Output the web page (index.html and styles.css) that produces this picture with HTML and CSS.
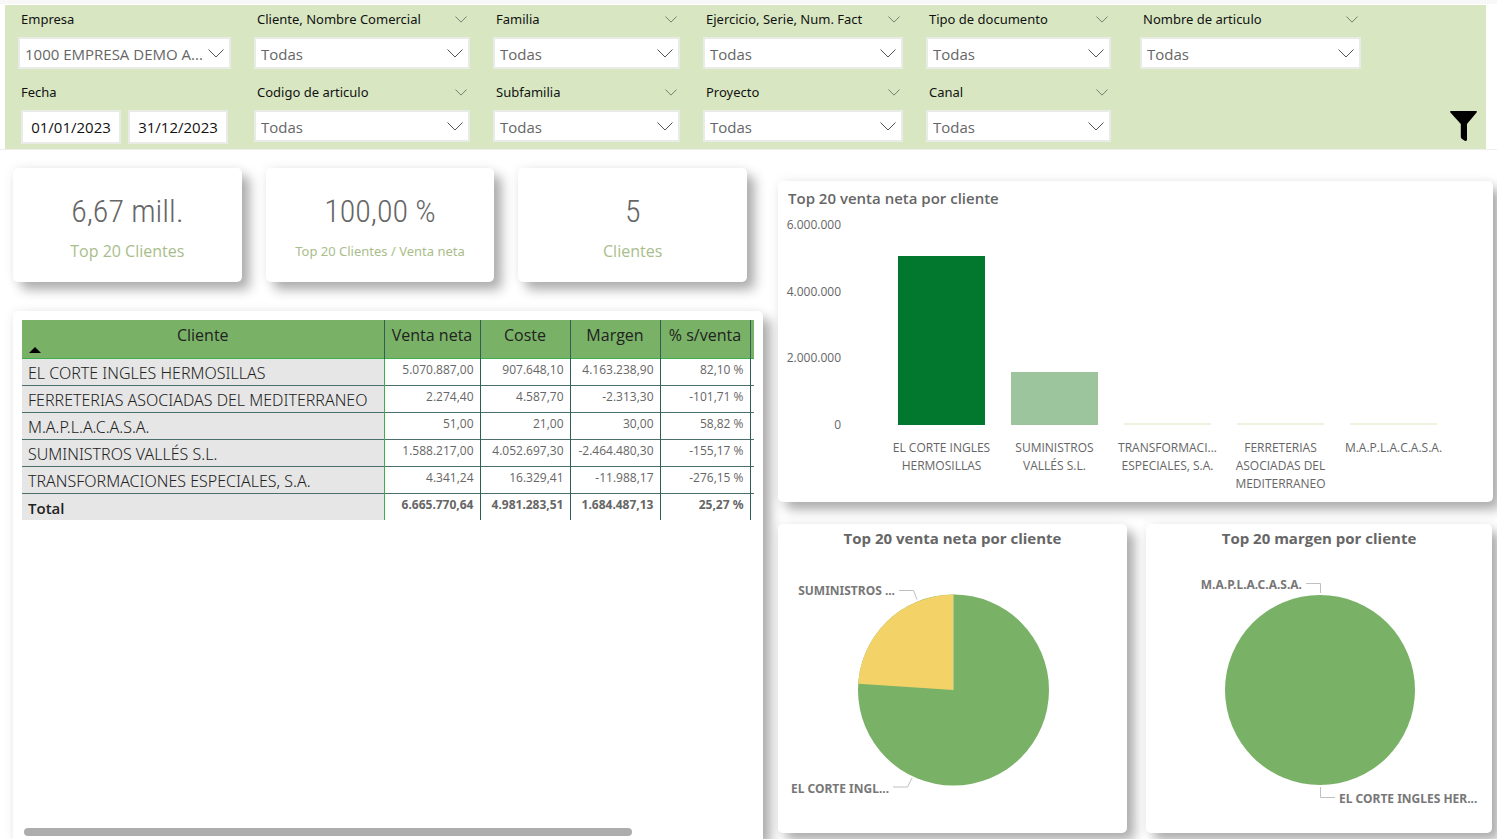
FILE: index.html
```html
<!DOCTYPE html>
<html lang="es">
<head>
<meta charset="utf-8">
<meta name="viewport" content="width=device-width, initial-scale=1">
<title>Top 20 clientes</title>
<link rel="stylesheet" href="styles.css">
</head>
<body>
<svg class="defs" aria-hidden="true">
  <symbol id="chev" viewBox="0 0 16 9"><path d="M0.5 0.5 8 8 15.5 0.5" fill="none" stroke="currentColor"/></symbol>
</svg>

<form class="filters">
  <div class="filter">
    <div class="filter-head"><label for="empresa">Empresa</label></div>
    <div class="drop"><select id="empresa"><option>1000 EMPRESA DEMO A...</option></select><svg><use href="#chev"/></svg></div>
  </div>
  <div class="filter">
    <div class="filter-head"><label for="cliente">Cliente, Nombre Comercial</label><button type="button" aria-label="Opciones de cliente"><svg><use href="#chev"/></svg></button></div>
    <div class="drop"><select id="cliente"><option>Todas</option></select><svg><use href="#chev"/></svg></div>
  </div>
  <div class="filter">
    <div class="filter-head"><label for="familia">Familia</label><button type="button" aria-label="Opciones de familia"><svg><use href="#chev"/></svg></button></div>
    <div class="drop"><select id="familia"><option>Todas</option></select><svg><use href="#chev"/></svg></div>
  </div>
  <div class="filter">
    <div class="filter-head"><label for="ejercicio">Ejercicio, Serie, Num. Fact</label><button type="button" aria-label="Opciones de ejercicio"><svg><use href="#chev"/></svg></button></div>
    <div class="drop"><select id="ejercicio"><option>Todas</option></select><svg><use href="#chev"/></svg></div>
  </div>
  <div class="filter filter-short">
    <div class="filter-head"><label for="tipo">Tipo de documento</label><button type="button" aria-label="Opciones de tipo"><svg><use href="#chev"/></svg></button></div>
    <div class="drop"><select id="tipo"><option>Todas</option></select><svg><use href="#chev"/></svg></div>
  </div>
  <div class="filter filter-last">
    <div class="filter-head"><label for="nombre">Nombre de articulo</label><button type="button" aria-label="Opciones de nombre"><svg><use href="#chev"/></svg></button></div>
    <div class="drop"><select id="nombre"><option>Todas</option></select><svg><use href="#chev"/></svg></div>
  </div>

  <div class="filter">
    <div class="filter-head"><label for="desde">Fecha</label></div>
    <div class="dates"><input id="desde" type="text" value="01/01/2023"><input type="text" value="31/12/2023" aria-label="Fecha hasta"></div>
  </div>
  <div class="filter">
    <div class="filter-head"><label for="codigo">Codigo de articulo</label><button type="button" aria-label="Opciones de codigo"><svg><use href="#chev"/></svg></button></div>
    <div class="drop"><select id="codigo"><option>Todas</option></select><svg><use href="#chev"/></svg></div>
  </div>
  <div class="filter">
    <div class="filter-head"><label for="subfamilia">Subfamilia</label><button type="button" aria-label="Opciones de subfamilia"><svg><use href="#chev"/></svg></button></div>
    <div class="drop"><select id="subfamilia"><option>Todas</option></select><svg><use href="#chev"/></svg></div>
  </div>
  <div class="filter">
    <div class="filter-head"><label for="proyecto">Proyecto</label><button type="button" aria-label="Opciones de proyecto"><svg><use href="#chev"/></svg></button></div>
    <div class="drop"><select id="proyecto"><option>Todas</option></select><svg><use href="#chev"/></svg></div>
  </div>
  <div class="filter filter-short">
    <div class="filter-head"><label for="canal">Canal</label><button type="button" aria-label="Opciones de canal"><svg><use href="#chev"/></svg></button></div>
    <div class="drop"><select id="canal"><option>Todas</option></select><svg><use href="#chev"/></svg></div>
  </div>
  <button type="button" class="funnel" aria-label="Filtros"><svg viewBox="0 0 27 30"><path d="M1 0h25q1.500 0 .6 1.400L17 13v15.500q0 2-2.200 1.200L12 28q-1.200-.8-1.200-2.200V13L.4 1.400Q-.5 0 1 0z"/></svg></button>
</form>

<main class="board">
  <section class="left">
    <div class="kpis">
      <article class="card kpi"><strong>6,67 mill.</strong><span>Top 20 Clientes</span></article>
      <article class="card kpi"><strong>100,00 %</strong><span class="small">Top 20 Clientes / Venta neta</span></article>
      <article class="card kpi"><strong>5</strong><span>Clientes</span></article>
    </div>
    <div class="card sheet">
      <table>
        <colgroup><col class="c-name"><col class="c-net"><col class="c-num"><col class="c-num"><col class="c-num"><col class="c-end"></colgroup>
        <thead>
          <tr><th scope="col" class="sorted">Cliente<svg viewBox="0 0 12 6"><path d="M0 6 6 0 12 6z"/></svg></th><th scope="col">Venta neta</th><th scope="col">Coste</th><th scope="col">Margen</th><th scope="col">% s/venta</th><td></td></tr>
        </thead>
        <tbody>
          <tr><th scope="row">EL CORTE INGLES HERMOSILLAS</th><td>5.070.887,00</td><td>907.648,10</td><td>4.163.238,90</td><td>82,10 %</td><td></td></tr>
          <tr><th scope="row">FERRETERIAS ASOCIADAS DEL MEDITERRANEO</th><td>2.274,40</td><td>4.587,70</td><td>-2.313,30</td><td>-101,71 %</td><td></td></tr>
          <tr><th scope="row">M.A.P.L.A.C.A.S.A.</th><td>51,00</td><td>21,00</td><td>30,00</td><td>58,82 %</td><td></td></tr>
          <tr><th scope="row">SUMINISTROS VALLÉS S.L.</th><td>1.588.217,00</td><td>4.052.697,30</td><td>-2.464.480,30</td><td>-155,17 %</td><td></td></tr>
          <tr><th scope="row">TRANSFORMACIONES ESPECIALES, S.A.</th><td>4.341,24</td><td>16.329,41</td><td>-11.988,17</td><td>-276,15 %</td><td></td></tr>
        </tbody>
        <tfoot>
          <tr><th scope="row">Total</th><td>6.665.770,64</td><td>4.981.283,51</td><td>1.684.487,13</td><td>25,27 %</td><td></td></tr>
        </tfoot>
      </table>
      <div class="scroll"></div>
    </div>
  </section>

  <section class="right">
    <article class="card bars">
      <h2>Top 20 venta neta por cliente</h2>
      <div class="chart">
        <div class="axis"><span>6.000.000</span><span>4.000.000</span><span>2.000.000</span><span>0</span></div>
        <div class="plot">
          <div class="slot"><i class="bar dark" style="height:84.5%"></i></div>
          <div class="slot"><i class="bar mid" style="height:26.5%"></i></div>
          <div class="slot"><i class="bar" style="height:0.07%"></i></div>
          <div class="slot"><i class="bar" style="height:0.04%"></i></div>
          <div class="slot"><i class="bar" style="height:0%"></i></div>
        </div>
        <div class="names">
          <span>EL CORTE INGLES<br>HERMOSILLAS</span>
          <span>SUMINISTROS<br>VALLÉS S.L.</span>
          <span>TRANSFORMACI...<br>ESPECIALES, S.A.</span>
          <span>FERRETERIAS<br>ASOCIADAS DEL<br>MEDITERRANEO</span>
          <span>M.A.P.L.A.C.A.S.A.</span>
        </div>
      </div>
    </article>
    <div class="pies">
      <article class="card pie">
        <h3>Top 20 venta neta por cliente</h3>
        <svg viewBox="0 0 349 279">
          <circle cx="175.500" cy="136" r="95.500" fill="#79b166"/>
          <path d="M175.500 136V40.500A95.500 95.500 0 0 0 80.200 129.800z" fill="#f3d268"/>
          <path d="M175.500 136V40.500" stroke="#a9cb84"/>
          <path d="M121 36.500h14.500l3.500 9M115 233h14.500l4.500-9" class="lead"/>
          <text x="117" y="41" text-anchor="end">SUMINISTROS ...</text>
          <text x="111" y="239" text-anchor="end">EL CORTE INGL...</text>
        </svg>
      </article>
      <article class="card pie">
        <h3>Top 20 margen por cliente</h3>
        <svg viewBox="0 0 346 279">
          <circle cx="174" cy="136" r="95" fill="#79b166"/>
          <path d="M160 29.500h14.500V39M174.500 233v10.500H189" class="lead"/>
          <text x="156" y="35" text-anchor="end">M.A.P.L.A.C.A.S.A.</text>
          <text x="193" y="249">EL CORTE INGLES HER...</text>
        </svg>
      </article>
    </div>
  </section>
</main>
</body>
</html>
```
FILE: styles.css
```css
* { box-sizing: border-box; }

body {
  margin: 0;
  min-height: 100vh;
  display: flex;
  flex-direction: column;
  border-top: 4px solid #f8f8f8;
  background: #fff;
  color: #666;
  font-family: "Open Sans", "Noto Sans", sans-serif;
  overflow-x: hidden;
}

h2, h3 { margin: 0; }
.defs { position: absolute; width: 0; height: 0; }
button { padding: 0; border: 0; background: none; }

/* filter bar */
.filters {
  display: grid;
  grid-template-columns: 213fr 216fr 187fr 200fr 191fr 220fr 103fr;
  column-gap: 23px;
  row-gap: 13px;
  margin: 1px 11px 0 5px;
  padding: 4px 0 5px 13px;
  background: #d8e7c2;
}
.filter { min-width: 0; }
.filter-short { padding-right: 6px; }
.filter-last { grid-column: 6 / 8; width: 64%; }
.filter-head {
  display: flex;
  align-items: center;
  justify-content: space-between;
  height: 28px;
  padding: 0 3px 8px;
  font-family: "Noto Sans", sans-serif;
  font-size: 13px;
  line-height: 20px;
  color: #111;
}
.filter-head label { white-space: nowrap; }
.filter-head button { color: #555; height: 12px; }
.filter-head svg { display: block; width: 12px; height: 7px; }
.drop { position: relative; }
.drop select {
  appearance: none;
  width: 100%;
  height: 32px;
  padding: 2px 22px 0 5px;
  border: 2px solid #e9ebe6;
  border-radius: 0;
  background: #fff;
  color: #666;
  font: 15px "Open Sans", "Noto Sans", sans-serif;
}
.drop svg {
  position: absolute;
  right: 7px;
  top: 12px;
  width: 16px;
  height: 9px;
  color: #555;
  pointer-events: none;
}
.dates { display: grid; grid-template-columns: 1fr 1fr; gap: 7px; padding: 0 3px; }
.dates input {
  width: 100%;
  min-width: 0;
  height: 34px;
  padding: 0;
  border: 2px solid #e9ebe6;
  background: #fff;
  color: #111;
  text-align: center;
  font: 15px "Open Sans", "Noto Sans", sans-serif;
}
.funnel { grid-column: 7; justify-self: end; align-self: end; margin: 0 9px 3px 0; height: 30px; }
.funnel svg { display: block; width: 27px; height: 30px; }

/* board */
.board {
  flex: 1;
  display: grid;
  grid-template-columns: 750fr 715fr;
  column-gap: 15px;
  padding: 0 4px 0 13px;
  border-top: 1px solid #eee;
}
.card {
  background: #fff;
  border-radius: 5px;
  box-shadow: 8px 8px 12px rgba(0, 0, 0, .3), 0 0 12px rgba(0, 0, 0, .07);
}
.left { display: flex; flex-direction: column; padding-top: 18px; min-width: 0; }
.kpis { display: grid; grid-template-columns: repeat(3, 1fr); gap: 24px; margin: 0 16px 29px 0; }
.kpi {
  height: 114px;
  padding-top: 22px;
  display: flex;
  flex-direction: column;
  align-items: center;
}
.kpi strong { font: 300 32px/42px "Roboto Condensed", Roboto, sans-serif; color: #666; }
.kpi span { margin-top: 8px; font-size: 16px; line-height: 22px; color: #a9bd8b; }
.kpi .small { font-family: "Noto Sans", sans-serif; font-size: 13px; }

.sheet {
  flex: 1;
  display: flex;
  flex-direction: column;
  justify-content: space-between;
  padding: 9px 9px 3px;
  border-radius: 5px 5px 0 0;
}
table { width: 100%; table-layout: fixed; border-collapse: collapse; }
.c-net { width: 96px; }
.c-num { width: 90px; }
.c-end { width: 4px; }
thead tr { height: 38px; background: #79b166; border-bottom: 1px solid #3fae4f; }
thead th {
  position: relative;
  padding: 4px 0 0;
  vertical-align: top;
  font-size: 16px;
  line-height: 22px;
  font-weight: 400;
  color: #222;
  border-right: 1px solid #2f5d57;
}
.sorted svg { position: absolute; left: 7px; bottom: 5px; width: 12px; height: 6px; }
tbody tr, tfoot tr { height: 27px; }
tbody tr { border-bottom: 1px solid #4b6f6a; }
tbody th, tfoot th {
  padding: 3px 0 0 6px;
  background: #e6e6e6;
  border-right: 1px solid #3fae4f;
  text-align: left;
  font-family: "Noto Sans", sans-serif;
  font-size: 16px;
  line-height: 22px;
  font-weight: 300;
  color: #222;
  white-space: nowrap;
}
tbody td, tfoot td {
  padding: 2px 6px 0 0;
  vertical-align: top;
  border-right: 1px solid #2f5d57;
  text-align: right;
  font-size: 12px;
  line-height: 18px;
}
tbody td:last-child, tfoot td:last-child { border-right: 0; padding: 0; }
tfoot th { font-family: "Open Sans", sans-serif; font-weight: 600; font-size: 15px; }
tfoot td { font-family: "Noto Sans", sans-serif; font-weight: 700; }
.scroll { width: 83%; height: 8px; margin-left: 2px; border-radius: 5px; background: #adadad; }

.right { padding-top: 31px; min-width: 0; }
.bars { height: 321px; padding: 5px 43px 0 10px; }
.bars h2 { font-size: 15px; line-height: 24px; font-weight: 600; }
.chart { display: grid; grid-template-columns: 53px 1fr; column-gap: 44px; font-size: 12px; }
.axis {
  height: 218px;
  margin-top: 6px;
  display: flex;
  flex-direction: column;
  justify-content: space-between;
  align-items: flex-end;
  line-height: 18px;
}
.plot { height: 200px; margin-top: 15px; display: grid; grid-template-columns: repeat(5, 1fr); }
.slot { display: flex; align-items: flex-end; justify-content: center; }
.bar { width: 77%; min-height: 2px; background: #eef3e0; }
.bar.mid { background: #9dc59d; }
.bar.dark { background: #02782f; }
.names {
  grid-column: 2;
  display: grid;
  grid-template-columns: repeat(5, 1fr);
  margin-top: 5px;
  text-align: center;
  line-height: 18px;
  white-space: nowrap;
}

.pies { display: grid; grid-template-columns: 349fr 346fr; gap: 19px; margin: 22px 1px 0 0; }
.pie { padding-top: 3px; }
.pie h3 { margin-bottom: 5px; font-size: 15px; line-height: 22px; font-weight: 700; text-align: center; }
.pie svg { display: block; width: 100%; }
.pie text { font-family: "Noto Sans", sans-serif; font-size: 12px; font-weight: 700; fill: #777; }
.lead { fill: none; stroke: #c0c0c0; }
```
